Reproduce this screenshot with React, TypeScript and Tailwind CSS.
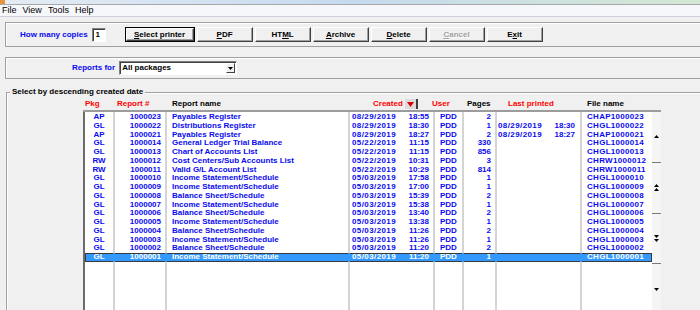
import React from 'react';

type Row = [string, string, string, string, string, string, string, string, string, string];

const rows: Row[] = [
  ['AP', '1000023', 'Payables Register', '08/29/2019', '18:55', 'PDD', '2', '', '', 'CHAP1000023'],
  ['GL', '1000022', 'Distributions Register', '08/29/2019', '18:30', 'PDD', '1', '08/29/2019', '18:30', 'CHGL1000022'],
  ['AP', '1000021', 'Payables Register', '08/29/2019', '18:27', 'PDD', '2', '08/29/2019', '18:27', 'CHAP1000021'],
  ['GL', '1000014', 'General Ledger Trial Balance', '05/22/2019', '11:15', 'PDD', '330', '', '', 'CHGL1000014'],
  ['GL', '1000013', 'Chart of Accounts List', '05/22/2019', '11:15', 'PDD', '856', '', '', 'CHGL1000013'],
  ['RW', '1000012', 'Cost Centers/Sub Accounts List', '05/22/2019', '10:31', 'PDD', '3', '', '', 'CHRW1000012'],
  ['RW', '1000011', 'Valid G/L Account List', '05/22/2019', '10:29', 'PDD', '814', '', '', 'CHRW1000011'],
  ['GL', '1000010', 'Income Statement/Schedule', '05/03/2019', '17:58', 'PDD', '1', '', '', 'CHGL1000010'],
  ['GL', '1000009', 'Income Statement/Schedule', '05/03/2019', '17:00', 'PDD', '1', '', '', 'CHGL1000009'],
  ['GL', '1000008', 'Balance Sheet/Schedule', '05/03/2019', '15:39', 'PDD', '2', '', '', 'CHGL1000008'],
  ['GL', '1000007', 'Income Statement/Schedule', '05/03/2019', '15:38', 'PDD', '1', '', '', 'CHGL1000007'],
  ['GL', '1000006', 'Balance Sheet/Schedule', '05/03/2019', '13:40', 'PDD', '2', '', '', 'CHGL1000006'],
  ['GL', '1000005', 'Income Statement/Schedule', '05/03/2019', '13:38', 'PDD', '1', '', '', 'CHGL1000005'],
  ['GL', '1000004', 'Balance Sheet/Schedule', '05/03/2019', '11:26', 'PDD', '2', '', '', 'CHGL1000004'],
  ['GL', '1000003', 'Income Statement/Schedule', '05/03/2019', '11:26', 'PDD', '1', '', '', 'CHGL1000003'],
  ['GL', '1000002', 'Balance Sheet/Schedule', '05/03/2019', '11:20', 'PDD', '2', '', '', 'CHGL1000002'],
  ['GL', '1000001', 'Income Statement/Schedule', '05/03/2019', '11:20', 'PDD', '1', '', '', 'CHGL1000001'],
];

const SELECTED = 16;

const Button = ({
  pre = '',
  u,
  post = '',
  w = 'w-[56px]',
  isDefault = false,
  disabled = false,
}: {
  pre?: string;
  u: string;
  post?: string;
  w?: string;
  isDefault?: boolean;
  disabled?: boolean;
}) => (
  <div className={`${w} h-[15px] ${isDefault ? 'border border-black' : ''}`}>
    <div className="h-full border-t border-l border-white border-r border-b border-r-[#404040] border-b-[#404040] shadow-[inset_-1px_-1px_0_#a0a0a0] bg-[#f0f0f0] flex items-center justify-center">
      <span
        className={`text-[8px] font-bold leading-none ${
          disabled ? 'text-[#a0a0a0] [text-shadow:1px_1px_0_#fff]' : 'text-black'
        }`}
      >
        {pre}
        <span className="underline">{u}</span>
        {post}
      </span>
    </div>
  </div>
);

const TriUp = () => (
  <svg width="5" height="3" viewBox="0 0 5 3">
    <path d="M2.5 0 L5 3 L0 3 Z" fill="#000" />
  </svg>
);
const TriDown = () => (
  <svg width="5" height="3" viewBox="0 0 5 3">
    <path d="M0 0 L5 0 L2.5 3 Z" fill="#000" />
  </svg>
);

const Cells = ({ r, selected }: { r?: Row; selected?: boolean }) => {
  const sep = selected ? 'border-r-2 border-[#3399ff]' : 'border-r-2 border-[#d4d4d4]';
  return (
    <>
      <div className={`w-[30px] ${sep} text-center`}>{r?.[0]}</div>
      <div className={`w-[52px] ${sep} text-right pr-[4px]`}>{r?.[1]}</div>
      <div className={`w-[183px] ${sep} pl-[5px] whitespace-nowrap`}>{r?.[2]}</div>
      <div className={`w-[85px] ${sep} pl-[2px] pr-[4px] flex justify-between`}>
        <span className="tracking-[0.4px]">{r?.[3]}</span>
        <span>{r?.[4]}</span>
      </div>
      <div className={`w-[29px] ${sep} pl-[5px]`}>{r?.[5]}</div>
      <div className={`w-[33px] ${sep} text-right pr-[4px]`}>{r?.[6]}</div>
      <div className={`w-[85px] ${sep} pl-[1px] pr-[5px] flex justify-between`}>
        <span className="tracking-[0.4px]">{r?.[7]}</span>
        <span>{r?.[8]}</span>
      </div>
      <div className="w-[69px] pl-[5px] tracking-[0.3px]">{r?.[9]}</div>
    </>
  );
};

const App = () => {
  return (
    <div className="w-[700px] h-[310px] overflow-hidden bg-[#f0f0f0] font-['Liberation_Sans',Arial,sans-serif] select-none">
      {/* Title bar remnant */}
      <div className="h-[5px] flex border-b border-[#a8a8a8] bg-gradient-to-r from-[#e4ecf4] via-[#c6daef] to-[#d3e7d3]">
        <div className="w-[5px] bg-[#e8943a]" />
      </div>

      {/* Menu */}
      <div className="h-[12px] flex items-center gap-[6px] pl-[2px] bg-[#f6f7fb] border-b border-[#cfd0da] text-[9px] text-black leading-none">
        <span>File</span>
        <span>View</span>
        <span>Tools</span>
        <span>Help</span>
      </div>

      {/* Copies / actions panel */}
      <div className="mt-[5px] ml-[5px] w-[720px] h-[25px] border border-[#a0a0a0] shadow-[inset_1px_1px_0_#fff] flex items-center pl-[14px]">
        <span className="text-[8px] font-bold text-[#0a0af0] leading-none">How many copies</span>
        <div className="ml-[4px] w-[14px] h-[14px] bg-white border-t border-l border-[#808080] border-r border-b border-r-white border-b-white shadow-[inset_1px_1px_0_#404040] flex items-center pl-[3px] text-[8px] font-bold leading-none">
          1
        </div>
        <div className="ml-[19px] flex gap-[2px]">
          <Button u="S" post="elect printer" w="w-[70px]" isDefault />
          <Button u="P" post="DF" />
          <Button pre="HT" u="M" post="L" />
          <Button u="A" post="rchive" />
          <Button u="D" post="elete" />
          <Button u="C" post="ancel" disabled />
          <Button pre="E" u="x" post="it" />
        </div>
      </div>

      {/* Reports for panel */}
      <div className="mt-[10px] ml-[5px] w-[720px] h-[22px] border border-[#a0a0a0] shadow-[inset_1px_1px_0_#fff] flex items-center pl-[66px]">
        <span className="text-[8px] font-bold text-[#0a0af0] leading-none">Reports for</span>
        <div className="ml-[4px] w-[118px] h-[14px] bg-white border-t border-l border-[#808080] border-r border-b border-r-white border-b-white shadow-[inset_1px_1px_0_#404040] flex items-center justify-between pl-[2px] pr-[1px]">
          <span className="text-[8px] font-bold text-black leading-none">All packages</span>
          <div className="w-[9px] h-[10px] bg-[#f0f0f0] border-t border-l border-white border-r border-b border-r-[#404040] border-b-[#404040] flex items-center justify-center">
            <TriDown />
          </div>
        </div>
      </div>

      {/* Report list group */}
      <fieldset className="mt-[8px] ml-[6px] w-[720px] h-[240px] border border-[#a0a0a0] shadow-[inset_1px_1px_0_#fff]">
        <legend className="ml-[3px] px-[2px] text-[8px] font-bold text-black leading-[10px] bg-[#f0f0f0]">
          Select by descending created date
        </legend>

        {/* Column headings */}
        <div className="mt-[1px] h-[12px] pl-[78px] flex items-center text-[8px] font-bold leading-none whitespace-nowrap">
          <span className="w-[32px] text-[#ff0000]">Pkg</span>
          <span className="w-[55px] text-[#ff0000]">Report #</span>
          <span className="w-[201px] text-black">Report name</span>
          <span className="w-[32px] text-[#ff0000]">Created</span>
          <span className="h-[10px] w-[13px] bg-[#dcdcdc] border-r-2 border-[#404040] flex items-center justify-center">
            <svg width="7" height="5" viewBox="0 0 7 5">
              <path d="M0 0 L7 0 L3.5 5 Z" fill="#e00000" />
            </svg>
          </span>
          <span className="ml-[14px] w-[35px] text-[#ff0000]">User</span>
          <span className="w-[41px] text-black">Pages</span>
          <span className="w-[79px] text-[#ff0000]">Last printed</span>
          <span className="text-black">File name</span>
        </div>

        {/* List box */}
        <div className="ml-[76px] w-[578px] h-[205px] flex border-t-2 border-[#9c9c9c]">
          <div className="w-[569px] flex flex-col bg-white border-l-2 border-[#6b6b6b] text-[8px] font-bold leading-[8.75px] text-[#0a0af0]">
            <div className="h-[1px] flex">
              <Cells />
            </div>
            {rows.map((r, i) => (
              <div
                key={r[1]}
                className={`h-[8.75px] flex whitespace-nowrap ${
                  i === SELECTED ? 'bg-[#3399ff] text-white shadow-[inset_0_0_0_1px_#3a3a3a]' : ''
                }`}
              >
                <Cells r={r} selected={i === SELECTED} />
              </div>
            ))}
            <div className="flex-1 flex">
              <Cells />
            </div>
          </div>

          {/* Scroll buttons */}
          <div className="w-[9px] flex flex-col bg-[#f5f5f5]">
            <div className="h-[55px] border-b border-[#7a7a7a] flex items-center justify-center">
              <TriUp />
            </div>
            <div className="h-[55px] border-b border-[#7a7a7a] flex flex-col items-center justify-center gap-[1px]">
              <TriUp />
              <TriUp />
            </div>
            <div className="h-[55px] border-b border-[#7a7a7a] flex flex-col items-center justify-center gap-[1px]">
              <TriDown />
              <TriDown />
            </div>
            <div className="h-[55px] flex items-center justify-center">
              <TriDown />
            </div>
          </div>
        </div>
      </fieldset>
    </div>
  );
};

export default App;
